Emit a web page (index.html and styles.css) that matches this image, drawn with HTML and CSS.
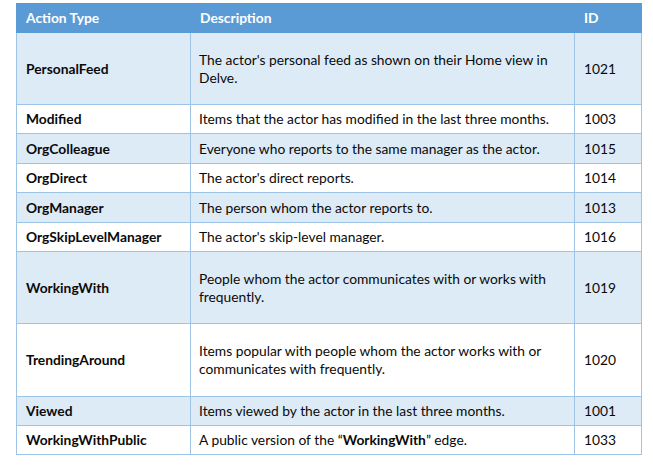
FILE: index.html
```html
<!DOCTYPE html>
<html>
<head>
<meta charset="utf-8">
<link rel="stylesheet" href="styles.css">
</head>
<body>
<table class="grid">
  <colgroup>
    <col class="c1"><col class="c2"><col class="c3">
  </colgroup>
  <thead>
    <tr class="head"><th>Action Type</th><th>Description</th><th>ID</th></tr>
  </thead>
  <tbody>
    <tr class="alt tall"><td class="name">PersonalFeed</td><td>The actor's personal feed as shown on their Home view in Delve.</td><td>1021</td></tr>
    <tr class="r29"><td class="name">Modified</td><td>Items that the actor has modified in the last three months.</td><td>1003</td></tr>
    <tr class="alt r30"><td class="name">OrgColleague</td><td>Everyone who reports to the same manager as the actor.</td><td>1015</td></tr>
    <tr class="r29"><td class="name">OrgDirect</td><td>The actor's direct reports.</td><td>1014</td></tr>
    <tr class="alt r30"><td class="name">OrgManager</td><td>The person whom the actor reports to.</td><td>1013</td></tr>
    <tr class="r29"><td class="name">OrgSkipLevelManager</td><td>The actor's skip-level manager.</td><td>1016</td></tr>
    <tr class="alt tall"><td class="name">WorkingWith</td><td>People whom the actor communicates with or works with frequently.</td><td>1019</td></tr>
    <tr class="tall2"><td class="name">TrendingAround</td><td>Items popular with people whom the actor works with or communicates with frequently.</td><td>1020</td></tr>
    <tr class="alt r29"><td class="name">Viewed</td><td>Items viewed by the actor in the last three months.</td><td>1001</td></tr>
    <tr class="r29"><td class="name">WorkingWithPublic</td><td>A public version of the “<b>WorkingWith</b>” edge.</td><td>1033</td></tr>
  </tbody>
</table>
</body>
</html>
```
FILE: styles.css
```css
html, body {
  margin: 0;
  padding: 0;
  background: #ffffff;
}
body {
  font-family: Lato, "Liberation Sans", sans-serif;
  font-size: 13.8px;
  color: #0a0a0a;
}
.grid {
  margin: 3px 0 0 16px;
  border-collapse: collapse;
  table-layout: fixed;
  width: 625px;
}
.c1 { width: 174px; }
.c2 { width: 384px; }
.c3 { width: 67px; }
.grid th,
.grid td {
  border: 1px solid #9dc3e6;
  padding: 0 8px 0 9px;
  text-align: left;
  vertical-align: middle;
  line-height: 18px;
}
.grid td:nth-child(2) { padding-left: 8px; padding-right: 18px; }
.head th {
  background: #5b9bd5;
  border-color: #5b9bd5;
  color: #ffffff;
  font-weight: bold;
  height: 27px;
  padding-top: 0;
  padding-bottom: 1px;
  line-height: 16px;
}
.alt td { background: #ddebf7; }
.name { font-weight: bold; }
.r29 { height: 29px; }
.r30 { height: 30px; }
.tall { height: 72px; }
.tall2 { height: 73px; }
```
